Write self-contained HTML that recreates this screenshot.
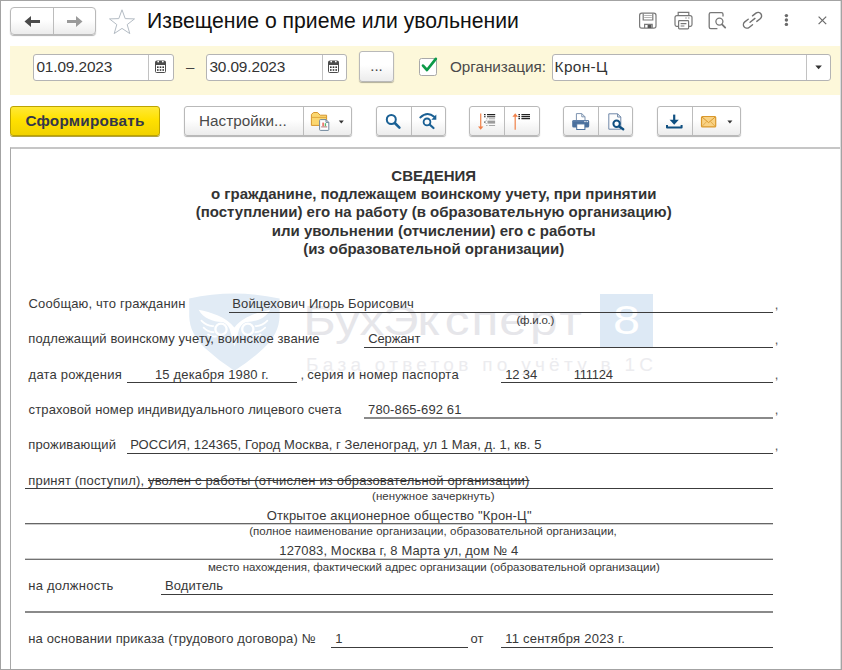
<!DOCTYPE html>
<html lang="ru">
<head>
<meta charset="utf-8">
<title>Извещение о приеме или увольнении</title>
<style>
html,body{margin:0;padding:0;}
body{width:842px;height:670px;overflow:hidden;background:#fff;position:relative;
 font-family:"Liberation Sans",sans-serif;color:#333;}
.abs{position:absolute;}
#frame{position:absolute;left:0;top:0;width:840px;height:668px;border:1px solid #a3a3a3;box-shadow:inset -1px 0 0 #dedede;pointer-events:none;z-index:50;}
.btn{position:absolute;box-sizing:border-box;border:1px solid #b9b9b9;border-radius:3px;
 background:linear-gradient(#ffffff 0%,#ffffff 45%,#ececec 100%);box-shadow:0 1px 1px rgba(0,0,0,.3);}
.sep{position:absolute;top:0;bottom:0;width:1px;background:#bcbcbc;}
.inp{position:absolute;box-sizing:border-box;border:1px solid #b4b4b4;border-radius:3px;background:#fff;}
.inp .t{position:absolute;left:2.4px;top:-0.6px;font-size:15.4px;line-height:25px;color:#333;white-space:nowrap;}
.inp .sep{background:#c2c2c2;}
#title{left:147px;top:8px;font-size:21.2px;line-height:25px;color:#111;white-space:nowrap;}
#ybar{left:10px;top:45.5px;width:830px;height:49.5px;background:#fdf8da;}
.doc{font-size:13px;line-height:15px;color:#383838;white-space:nowrap;}
.sm{font-size:11.5px;line-height:13px;color:#383838;white-space:nowrap;}
.ln{position:absolute;height:1px;background:#3c3c3c;z-index:3;}
.z{z-index:3;}
.cm{color:#555;}
.hd{position:absolute;left:11px;width:845px;text-align:center;font-weight:bold;font-size:15px;line-height:18px;color:#333;white-space:nowrap;}
.c{position:absolute;text-align:center;}
</style>
</head>
<body>
<div id="frame"></div>

<!-- ===== title bar ===== -->
<div class="btn" style="left:10px;top:7px;width:86px;height:28px;border-radius:4px;">
  <div class="sep" style="left:42px;"></div>
  <svg class="abs" style="left:13px;top:7px" width="18" height="13" viewBox="0 0 18 13"><path d="M0.5 6.5 L7 1 V5 H16 V8 H7 V12 Z" fill="#4a4a4a"/></svg>
  <svg class="abs" style="left:54px;top:7px" width="18" height="13" viewBox="0 0 18 13"><path d="M17.5 6.5 L11 1 V5 H2 V8 H11 V12 Z" fill="#9a9a9a"/></svg>
</div>
<svg class="abs" style="left:108px;top:7.5px" width="28" height="27" viewBox="0 0 28 27"><path d="M14 1.8 L17.2 10.6 L26.5 10.9 L19.2 16.6 L21.8 25.6 L14 20.4 L6.2 25.6 L8.8 16.6 L1.5 10.9 L10.8 10.6 Z" fill="#fff" stroke="#b4bcc4" stroke-width="1"/></svg>
<div id="title" class="abs">Извещение о приеме или увольнении</div>

<!-- title icons placeholder -->

<svg class="abs" style="left:0;top:0;z-index:5" width="842" height="670" viewBox="0 0 842 670" fill="none">
 <!-- save -->
 <g stroke="#7a7a7a" stroke-width="1.2">
  <rect x="639.6" y="13.2" width="16.4" height="15" rx="2.2"/>
  <path d="M643.2 13.4 V20 H652.8 V13.4"/>
  <path d="M644.6 28 V24.4 H652.2 V28"/>
 </g>
 <path d="M644.2 15.5 H651.8 M644.2 17.5 H651.8" stroke="#b5b5b5" stroke-width="1"/>
 <rect x="647.6" y="25" width="3.8" height="3" fill="#555"/>
 <!-- printer -->
 <g stroke="#777" stroke-width="1.2">
  <path d="M678.2 15.4 V12.4 H688.8 V15.4"/>
  <path d="M678.4 26.4 H676.6 Q675 26.4 675 24.6 V17.6 Q675 15.6 677 15.6 H690 Q692 15.6 692 17.6 V24.6 Q692 26.4 690.4 26.4 H688.6"/>
  <rect x="678.6" y="20.6" width="10" height="8.2" rx="0.8" fill="#fff"/>
  <path d="M680.6 23.6 H686.4 M680.6 26 H684.4"/>
  <path d="M685.4 18 H686.6 M688.2 18 H689.4"/>
 </g>
 <!-- preview -->
 <g stroke="#777" stroke-width="1.3">
  <path d="M717.4 28.6 H710.8 Q709.2 28.6 709.2 27 V14.2 Q709.2 12.6 710.8 12.6 H721.4 Q723 12.6 723 14.2 V16.6"/>
  <circle cx="719.4" cy="21.6" r="3.5"/>
  <path d="M722 24.4 L725.2 27.6" stroke-width="1.8" stroke-linecap="round"/>
 </g>
 <!-- link -->
 <g stroke="#727272" stroke-width="1.4" stroke-linecap="round" transform="rotate(-38 752.5 20.3)">
  <path d="M749.8 16.8 H745.4 A3.5 3.5 0 0 0 745.4 23.8 H749.8"/>
  <path d="M755.2 16.8 H759.6 A3.5 3.5 0 0 1 759.6 23.8 H755.2"/>
  <path d="M749.4 20.3 H755.6"/>
 </g>
 <!-- dots -->
 <g fill="#6a6a6a"><circle cx="786.4" cy="15.6" r="1.7"/><circle cx="786.4" cy="20" r="1.7"/><circle cx="786.4" cy="24.4" r="1.7"/></g>
 <!-- close -->
 <path d="M818.6 16.6 L826.2 24.2 M826.2 16.6 L818.6 24.2" stroke="#6a6a6a" stroke-width="1.2"/>

 <!-- calendars -->
 <g id="cal1">
  <rect x="155.5" y="62.5" width="10" height="10" rx="1" fill="#fff" stroke="#4c4c4c"/>
  <path d="M155 62.2 Q155 60.4 157 60.4 H164 Q166 60.4 166 62.2 V65 H155 Z" fill="#4c4c4c"/>
  <circle cx="158.2" cy="61.6" r="0.9" fill="#fff"/><circle cx="162.8" cy="61.6" r="0.9" fill="#fff"/>
  <g fill="#333"><rect x="157" y="66.4" width="1.6" height="1.6"/><rect x="159.7" y="66.4" width="1.6" height="1.6"/><rect x="162.4" y="66.4" width="1.6" height="1.6"/>
  <rect x="157" y="69.2" width="1.6" height="1.6"/><rect x="159.7" y="69.2" width="1.6" height="1.6"/><rect x="162.4" y="69.2" width="1.6" height="1.6"/></g>
 </g>
 <use href="#cal1" x="173"/>

 <!-- checkbox -->
 <rect x="419.5" y="58.5" width="17" height="17" rx="2" fill="#fff" stroke="#a9a9a9"/>
 <path d="M423 65.6 L427 70 L435.8 58.9" stroke="#0d9a48" stroke-width="2.7" stroke-linecap="round" stroke-linejoin="round"/>
 <!-- select arrow -->
 <path d="M815.3 65.6 H821.9 L818.6 69.3 Z" fill="#333"/>

 <!-- folder + report -->
 <path d="M311.4 125.4 V114.4 L313.6 112.5 H317.6 L320.2 115.2 H326.6 V125.4 Z" fill="#fbd770" stroke="#d6962e" stroke-width="1"/>
 <path d="M311.8 117.4 H326.2" stroke="#e0a840" stroke-width="1"/>
 <path d="M319.6 120.4 Q319.6 119.6 320.4 119.6 H326 L328.8 122.4 V129.6 Q328.8 130.4 328 130.4 H320.4 Q319.6 130.4 319.6 129.6 Z" fill="#fff" stroke="#6f879c" stroke-width="1"/>
 <path d="M326 119.6 V122.4 H328.8" stroke="#6f879c" stroke-width="1"/>
 <rect x="322.4" y="122.6" width="1.4" height="3.6" fill="#e8574e"/><rect x="324.7" y="123.2" width="1.4" height="3" fill="#57b96a"/>
 <path d="M321.2 126.9 H327.2" stroke="#a05050" stroke-width="0.8"/>
 <path d="M338.8 120.6 H343.8 L341.3 123.4 Z" fill="#333"/>

 <!-- search -->
 <circle cx="391.3" cy="119.5" r="4.5" stroke="#1a6094" stroke-width="2"/>
 <path d="M394.8 123 L399.4 127.6" stroke="#1a6094" stroke-width="2.6" stroke-linecap="round"/>
 <!-- search next -->
 <circle cx="427" cy="121.9" r="3.4" stroke="#1a6094" stroke-width="1.8"/>
 <path d="M429.6 124.5 L433.5 128" stroke="#1a6094" stroke-width="2.2" stroke-linecap="round"/>
 <path d="M420.3 117.4 Q427.4 110.8 434.2 116.8" stroke="#1a6094" stroke-width="2" stroke-linecap="round"/>
 <path d="M436.3 114.6 V119.7 H431.4 Z" fill="#1a6094"/>

 <!-- expand / collapse -->
 <path d="M480.7 113.4 V127" stroke="#f08a55" stroke-width="1.3"/>
 <path d="M478 126.4 H483.4 L480.7 129.8 Z" fill="#f0804a"/>
 <g stroke="#222" stroke-width="1.1"><path d="M484 114.6 H485.6 M487 114.6 H495.2"/><path d="M484 116.8 H485.6 M487 116.8 H495.2"/></g>
 <g stroke="#a6a6a6" stroke-width="1"><path d="M486.2 118.8 H487.5 M488.9 118.8 H495.1"/><path d="M486.2 125.5 H487.5 M488.9 125.5 H495.1"/></g>
 <rect x="488" y="120.6" width="7.1" height="3" fill="#9c9c9c"/><circle cx="486.5" cy="122.1" r="1.4" fill="#fff" stroke="#a8a8a8" stroke-width="0.8"/>
 <path d="M484 122.1 H485.2" stroke="#666" stroke-width="1.1"/>
 <path d="M515.2 116 V129.8" stroke="#f08a55" stroke-width="1.3"/>
 <path d="M512.4 116.8 H518 L515.2 113.2 Z" fill="#f0804a"/>
 <g stroke="#222" stroke-width="1.1"><path d="M518.4 114.6 H520 M521.4 114.6 H530"/><path d="M518.4 116.6 H520 M521.4 116.6 H530"/><path d="M518.4 118.6 H520 M521.4 118.6 H530"/></g>

 <!-- print -->
 <path d="M576.4 120.4 V113.6 H581.8 L585 116.8 V120.4" fill="#fff" stroke="#7d93b0" stroke-width="1"/>
 <path d="M581.8 113.6 V116.8 H585" stroke="#7d93b0" stroke-width="1"/>
 <rect x="572.2" y="120" width="17" height="7.6" rx="1.6" fill="#4a709d"/>
 <rect x="572.6" y="120.3" width="16.2" height="1.2" rx="0.6" fill="#6484ad"/>
 <rect x="584.4" y="121" width="1.2" height="1.2" fill="#fff"/><rect x="586.6" y="121" width="1.2" height="1.2" fill="#fff"/>
 <rect x="576.7" y="123.9" width="8.2" height="5.6" fill="#fff" stroke="#4a709d" stroke-width="1"/>
 <!-- preview -->
 <path d="M608.8 129.2 V113.8 H617.6 L620.8 117 V129.2 Z" fill="#fdfdfd" stroke="#6f88a8" stroke-width="1"/>
 <path d="M617.6 113.8 V117 H620.8" stroke="#6f88a8" stroke-width="1"/>
 <circle cx="616.6" cy="123.8" r="3.2" fill="#fff" stroke="#0f4f80" stroke-width="2"/>
 <path d="M619.2 126.4 L623.2 129.2" stroke="#0f4f80" stroke-width="2.4" stroke-linecap="round"/>

 <!-- download -->
 <path d="M674.2 114.6 V122" stroke="#0f4f80" stroke-width="2.2"/>
 <path d="M669.6 119.8 H678.8 L674.2 124.8 Z" fill="#0f4f80"/>
 <path d="M667 125 V127.6 H681.6 V125" stroke="#0f4f80" stroke-width="2" stroke-linejoin="round"/>
 <!-- mail -->
 <rect x="701.5" y="116.5" width="14.2" height="10.4" rx="1" fill="#f9d284" stroke="#d9982c" stroke-width="1.2"/>
 <path d="M702 117 L708.6 122.6 L715.2 117" stroke="#d9982c" stroke-width="1"/>
 <path d="M702 126.4 L706.8 121.4 M715.2 126.4 L710.4 121.4" stroke="#e2a944" stroke-width="0.9"/>
 <path d="M727.4 120.6 H732.4 L729.9 123.4 Z" fill="#333"/>
</svg>


<!-- ===== yellow filter bar ===== -->
<div id="ybar" class="abs"></div>

<div class="inp" style="left:33px;top:54px;width:141px;height:27px;"><span class="t" style="letter-spacing:-.12px">01.09.2023</span><div class="sep" style="left:114px;"></div></div>
<div class="abs" style="left:186px;top:58px;font-size:15px;line-height:18px;color:#444;">–</div>
<div class="inp" style="left:206px;top:54px;width:141px;height:27px;"><span class="t" style="letter-spacing:-.12px">30.09.2023</span><div class="sep" style="left:115px;"></div></div>
<div class="btn" style="left:359px;top:51px;width:35px;height:31px;"><span class="abs" style="left:0;width:33px;text-align:center;top:4.5px;font-size:15px;line-height:18px;color:#444;">...</span></div>

<div class="abs" style="left:450px;top:57.6px;font-size:15.3px;line-height:18px;color:#4a4a4a;letter-spacing:-.05px;">Организация:</div>
<div class="inp" style="left:552px;top:54px;width:279px;height:27px;"><span class="t" style="left:1.6px;letter-spacing:.35px">Крон-Ц</span><div class="sep" style="left:253px;"></div></div>

<!-- ===== command bar ===== -->
<div class="abs" style="left:10px;top:106px;width:150px;height:30px;box-sizing:border-box;border:1px solid #bda400;border-radius:3px;background:linear-gradient(#ffe936 0%,#ffe100 45%,#f1d200 100%);box-shadow:0 1px 0 rgba(150,130,0,.75);">
  <span class="abs" style="left:0;width:148px;text-align:center;top:4.7px;font-size:15.3px;line-height:18px;font-weight:bold;letter-spacing:.22px;color:#33364a;">Сформировать</span>
</div>

<div class="btn" style="left:184px;top:106px;width:168px;height:30px;">
  <div class="sep" style="left:118px;"></div>
  <span class="abs" style="left:14px;top:4.7px;font-size:15.3px;line-height:18px;color:#4a4a4a;">Настройки...</span>
</div>
<div class="btn" style="left:376px;top:106px;width:70px;height:30px;"><div class="sep" style="left:34px;"></div></div>
<div class="btn" style="left:469px;top:106px;width:71px;height:30px;"><div class="sep" style="left:34px;"></div></div>
<div class="btn" style="left:563px;top:106px;width:70px;height:30px;"><div class="sep" style="left:34px;"></div></div>
<div class="btn" style="left:657px;top:106px;width:84px;height:30px;"><div class="sep" style="left:34px;"></div></div>

<!-- ===== document panel ===== -->
<div class="abs" style="left:10px;top:147px;width:840px;height:530px;box-sizing:border-box;border-top:2px solid #c6c6c6;border-left:1px solid #a8a8a8;background:#fff;"></div>


<svg class="abs" style="left:0;top:0;z-index:1" width="842" height="670" viewBox="0 0 842 670">
 <path d="M189.2 298.6 Q234.4 288.6 279.6 298.6 L279.6 316 Q279.2 334 263.3 348.5 Q250 361 234.4 370.8 Q219 361 205.5 348.5 Q189.6 334 189.2 316 Z" fill="#e1ebf5"/>
 <path d="M198.6 309.8 C211 312.5 226 316.5 234.4 327.5 C242.8 316.5 258 312.5 270.2 309.8 C265 319 256 321.5 247 322 C243.5 322.5 240.5 325.5 239 329.5 L234.4 346.5 L229.8 329.5 C228.3 325.5 225.3 322.5 221.8 322 C212.8 321.5 203.8 319 198.6 309.8 Z" fill="#fff"/>
 <g fill="none" stroke="#fff" stroke-width="2.3" stroke-linecap="round">
  <circle cx="221" cy="329.2" r="5.6"/>
  <circle cx="247.8" cy="329.2" r="5.6"/>
  <g stroke-width="1.7"><path d="M201.4 320.6 Q207 326.4 213.4 326"/>
  <path d="M203.6 327.6 Q208.6 332.4 213.6 332.2"/>
  <path d="M208 334.4 Q211.6 337.2 216 336.4"/>
  <path d="M267.4 320.6 Q261.8 326.4 255.4 326"/>
  <path d="M265.2 327.6 Q260.2 332.4 255.2 332.2"/>
  <path d="M260.8 334.4 Q257.2 337.2 252.8 336.4"/></g>
 </g>
 <rect x="600" y="294" width="53" height="53" fill="#dde9f5"/>
 <text transform="translate(300,334.5) scale(1.15,1)" font-family="'Liberation Sans',sans-serif" font-size="43" fill="#e6e6ea" x="2.9 30.4 51.7 72.1 102.2 125.8 149.1 173.3 200.1 225.5">БухЭксперт</text>
 <text x="626.5" y="334" text-anchor="middle" font-family="'Liberation Sans',sans-serif" font-size="40" fill="#ffffff" textLength="27" lengthAdjust="spacingAndGlyphs">8</text>
 <text x="306" y="371.2" font-family="'Liberation Sans',sans-serif" font-size="19" fill="#ececef" textLength="347" lengthAdjust="spacing">База ответов по учёту в 1С</text>
</svg>



<div class="hd" style="top:166.65px;line-height:18.3px;left:25px;width:817.4px;">СВЕДЕНИЯ<br>о гражданине, подлежащем воинскому учету, при принятии<br>(поступлении) его на работу (в образовательную организацию)<br>или увольнении (отчислении) его с работы<br>(из образовательной организации)</div>

<div class="ln" style="left:229px;top:312px;width:544px;"></div>
<div class="ln" style="left:364px;top:347px;width:409px;"></div>
<div class="ln" style="left:127px;top:382px;width:170px;"></div>
<div class="ln" style="left:501px;top:382px;width:272px;"></div>
<div class="ln" style="left:364px;top:417px;width:409px;height:2px;background:#8a8a8a;"></div>
<div class="ln" style="left:127px;top:453px;width:646px;"></div>
<div class="ln" style="left:25px;top:488px;width:748px;"></div>
<div class="ln" style="left:25px;top:523px;width:748px;background:#666;box-shadow:0 1px 0 #cdcdcd;"></div>
<div class="ln" style="left:25px;top:559px;width:748px;background:#727272;box-shadow:0 -1px 0 #cdcdcd;"></div>
<div class="ln" style="left:161px;top:594px;width:612px;"></div>
<div class="ln" style="left:25px;top:611px;width:748px;height:2px;background:#8a8a8a;"></div>
<div class="ln" style="left:331px;top:647px;width:137px;"></div>
<div class="ln" style="left:501px;top:647px;width:272px;"></div>

<div class="abs doc z cm" style="left:774.8px;top:297.4px;">,</div>
<div class="abs doc z cm" style="left:774.8px;top:332.4px;">,</div>
<div class="abs doc z cm" style="left:774.8px;top:367.4px;">,</div>
<div class="abs doc z cm" style="left:774.8px;top:402.4px;">,</div>
<div class="abs doc z cm" style="left:774.8px;top:438.4px;">,</div>
<div class="abs doc z cm" style="left:300.4px;top:366.8px;">,</div>
<div id="r1a" class="abs doc z" style="left:28.56px;top:296px;letter-spacing:0.136px">Сообщаю, что гражданин</div>
<div id="r1b" class="abs doc z" style="left:232.36px;top:296px;letter-spacing:0.090px">Войцехович Игорь Борисович</div>
<div id="fio" class="abs sm z" style="left:516.51px;top:313.8px;letter-spacing:-0.236px">(ф.и.о.)</div>
<div id="r2a" class="abs doc z" style="left:28.35px;top:331.3px;letter-spacing:0.095px">подлежащий воинскому учету, воинское звание</div>
<div id="r2b" class="abs doc z" style="left:368.19px;top:331.3px;letter-spacing:-0.124px">Сержант</div>
<div id="r3a" class="abs doc z" style="left:28.62px;top:366.8px;letter-spacing:0.216px">дата рождения</div>
<div id="r3b" class="abs doc z" style="left:154.93px;top:366.8px;letter-spacing:0.177px">15 декабря 1980 г.</div>
<div id="r3c" class="abs doc z" style="left:307.33px;top:366.8px;letter-spacing:0.243px">серия и номер паспорта</div>
<div id="r3d" class="abs doc z" style="left:505.16px;top:366.8px;letter-spacing:-0.133px">12 34</div>
<div id="r3e" class="abs doc z" style="left:573.79px;top:366.8px;letter-spacing:-0.279px">111124</div>
<div id="r4a" class="abs doc z" style="left:28.57px;top:402px;letter-spacing:0.128px">страховой номер индивидуального лицевого счета</div>
<div id="r4b" class="abs doc z" style="left:368.06px;top:402px;letter-spacing:0.122px">780-865-692 61</div>
<div id="r5a" class="abs doc z" style="left:28.31px;top:437.3px;letter-spacing:0.146px">проживающий</div>
<div id="r5b" class="abs doc z" style="left:130.15px;top:437.3px;letter-spacing:0.059px">РОССИЯ, 124365, Город Москва, г Зеленоград, ул 1 Мая, д. 1, кв. 5</div>
<div id="r6a" class="abs doc z" style="left:28.31px;top:473px;letter-spacing:0.169px">принят (поступил), <span style="text-decoration:line-through;">уволен с работы (отчислен из образовательной организации)</span></div>
<div id="nz" class="abs sm z" style="left:372.02px;top:489.5px;letter-spacing:0.060px">(ненужное зачеркнуть)</div>
<div id="org" class="abs doc z" style="left:266.69px;top:507.8px;letter-spacing:0.161px">Открытое акционерное общество "Крон-Ц"</div>
<div id="pn" class="abs sm z" style="left:249.16px;top:525.2px;letter-spacing:0.038px">(полное наименование организации, образовательной организации,</div>
<div id="adr" class="abs doc z" style="left:279.35px;top:543px;letter-spacing:0.112px">127083, Москва г, 8 Марта ул, дом № 4</div>
<div id="mn" class="abs sm z" style="left:207.95px;top:561.2px;letter-spacing:-0.013px">место нахождения, фактический адрес организации (образовательной организации)</div>
<div id="r7a" class="abs doc z" style="left:28.31px;top:577.8px;letter-spacing:0.236px">на должность</div>
<div id="r7b" class="abs doc z" style="left:164.94px;top:577.8px;letter-spacing:0.090px">Водитель</div>
<div id="r8a" class="abs doc z" style="left:28.31px;top:630.7px;letter-spacing:0.144px">на основании приказа (трудового договора) №</div>
<div id="r8b" class="abs doc z" style="left:335.18px;top:630.7px;letter-spacing:0.000px">1</div>
<div id="r8c" class="abs doc z" style="left:470.57px;top:630.7px;letter-spacing:0.000px">от</div>
<div id="r8d" class="abs doc z" style="left:505.16px;top:630.7px;letter-spacing:0.238px">11 сентября 2023 г.</div>
</body>
</html>
